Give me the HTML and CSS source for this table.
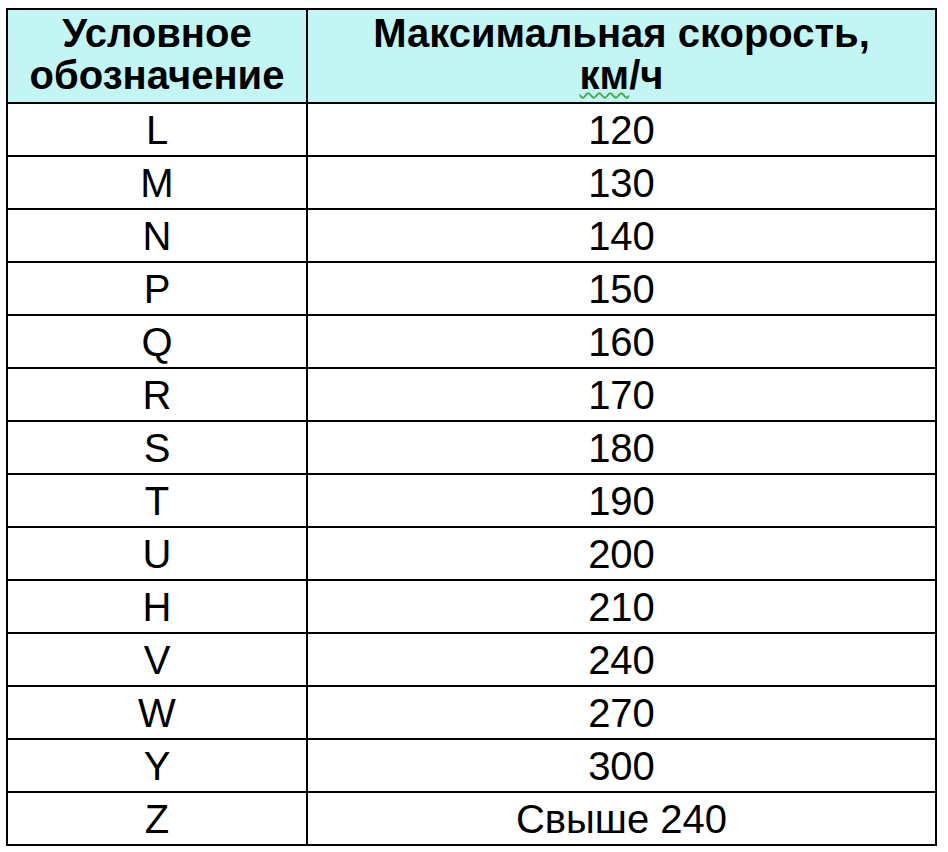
FILE: index.html
```html
<!DOCTYPE html>
<html lang="ru">
<head>
<meta charset="utf-8">
<title>Индексы скорости</title>
<link rel="stylesheet" href="styles.css">
</head>
<body>
<table class="speed-table">
  <thead>
    <tr>
      <th class="col-code">Условное<br>обозначение</th>
      <th class="col-speed">Максимальная скорость,<br><span class="spell">км</span>/ч</th>
    </tr>
  </thead>
  <tbody>
    <tr><td>L</td><td>120</td></tr>
    <tr><td>M</td><td>130</td></tr>
    <tr><td>N</td><td>140</td></tr>
    <tr><td>P</td><td>150</td></tr>
    <tr><td>Q</td><td>160</td></tr>
    <tr><td>R</td><td>170</td></tr>
    <tr><td>S</td><td>180</td></tr>
    <tr><td>T</td><td>190</td></tr>
    <tr><td>U</td><td>200</td></tr>
    <tr><td>H</td><td>210</td></tr>
    <tr><td>V</td><td>240</td></tr>
    <tr><td>W</td><td>270</td></tr>
    <tr><td>Y</td><td>300</td></tr>
    <tr><td>Z</td><td>Свыше 240</td></tr>
  </tbody>
</table>
</body>
</html>
```
FILE: styles.css
```css
html, body {
  background: #ffffff;
}
body {
  margin: 8px 0 0 6px;
  font-family: "Liberation Sans", Arial, sans-serif;
  color: #000;
}
.speed-table {
  border-collapse: collapse;
  width: 931px;
  table-layout: fixed;
}
.speed-table th,
.speed-table td {
  border: 2px solid #000;
  padding: 0;
  text-align: center;
  vertical-align: middle;
}
.speed-table th {
  background: #c4f5f5;
  font-weight: bold;
  font-size: 40px;
  line-height: 42px;
  height: 88px;
  padding-bottom: 4px;
}
.col-code {
  width: 298px;
}
.speed-table td {
  font-size: 40px;
  line-height: 44px;
  height: 51px;
}
.spell {
  text-decoration: underline wavy #45a845;
  text-decoration-thickness: 2px;
  text-underline-offset: 3px;
}
```
